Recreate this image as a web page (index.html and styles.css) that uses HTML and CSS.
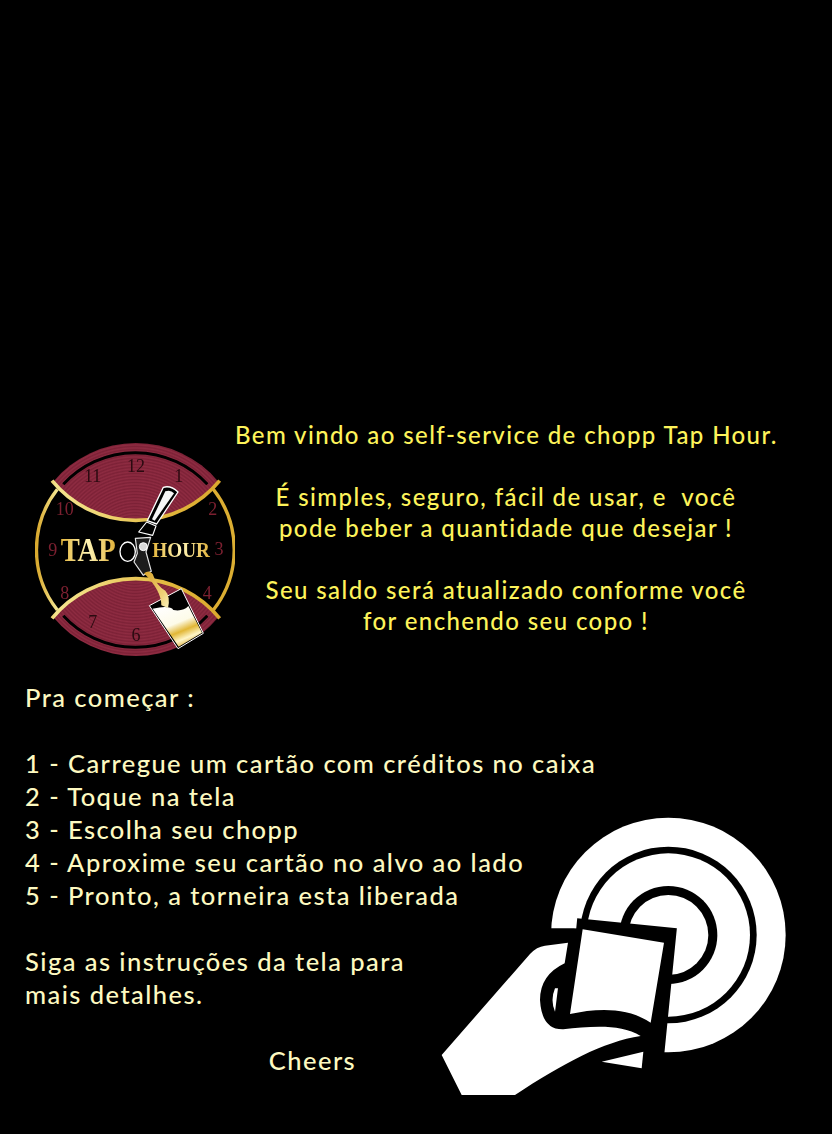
FILE: index.html
```html
<!DOCTYPE html>
<html lang="pt-BR">
<head>
    <meta charset="UTF-8">
    <meta name="viewport" content="width=device-width, initial-scale=1.0">
    <title>Tap Hour</title>
    <link rel="stylesheet" href="styles.css">
</head>
<body>
    <div class="screen">
        <div class="welcome">
            <svg class="logo" viewBox="45 30 600 660" xmlns="http://www.w3.org/2000/svg">
                <defs>
                    <radialGradient id="rings" gradientUnits="userSpaceOnUse" cx="345" cy="360" r="9" spreadMethod="repeat">
                        <stop offset="0" stop-color="#8f2c42"/>
                        <stop offset="0.5" stop-color="#7c2136"/>
                        <stop offset="1" stop-color="#8f2c42"/>
                    </radialGradient>
                    <linearGradient id="gold" gradientUnits="userSpaceOnUse" x1="50" y1="0" x2="640" y2="0">
                        <stop offset="0" stop-color="#d9a92e"/>
                        <stop offset="0.1" stop-color="#f4e48e"/>
                        <stop offset="0.3" stop-color="#f0d878"/>
                        <stop offset="0.7" stop-color="#e0b53a"/>
                        <stop offset="1" stop-color="#d9a52a"/>
                    </linearGradient>
                    <linearGradient id="goldText" x1="0" y1="0" x2="1" y2="0">
                        <stop offset="0" stop-color="#e3b53c"/>
                        <stop offset="0.5" stop-color="#fff4b4"/>
                        <stop offset="1" stop-color="#e0b038"/>
                    </linearGradient>
                    <linearGradient id="beer" x1="0.2" y1="0" x2="0.7" y2="1">
                        <stop offset="0" stop-color="#fff"/>
                        <stop offset="0.45" stop-color="#fdfbe8"/>
                        <stop offset="0.65" stop-color="#e2b736"/>
                        <stop offset="0.82" stop-color="#fff6c8"/>
                        <stop offset="1" stop-color="#d9a52a"/>
                    </linearGradient>
                    <linearGradient id="pour" x1="0" y1="0" x2="1" y2="1">
                        <stop offset="0" stop-color="#d9a52a"/>
                        <stop offset="0.7" stop-color="#efd27a"/>
                        <stop offset="1" stop-color="#fbf3c0"/>
                    </linearGradient>
                </defs>
                <path d="M100 155 A322 322 0 0 1 595 155 A325 325 0 0 1 100 155Z" fill="url(#rings)"/>
                <path d="M100 562 A322 322 0 0 0 595 562 A325 325 0 0 0 100 562Z" fill="url(#rings)"/>
                <path d="M130 163 A293 293 0 0 1 562 163" fill="none" stroke="#000" stroke-width="9"/>
                <path d="M130 557 A293 293 0 0 0 562 557" fill="none" stroke="#000" stroke-width="9"/>
                <path d="M112 178 A293 293 0 0 0 112 540" fill="none" stroke="url(#gold)" stroke-width="10"/>
                <path d="M580 178 A293 293 0 0 1 580 540" fill="none" stroke="#dcae32" stroke-width="10"/>
                <path d="M96 152 A325 325 0 0 0 599 152" fill="none" stroke="url(#gold)" stroke-width="11"/>
                <path d="M96 565 A325 325 0 0 1 599 565" fill="none" stroke="url(#gold)" stroke-width="11"/>

                <g class="hours dark">
                    <text x="348" y="125">12</text>
                    <text x="476" y="156">1</text>
                    <text x="218" y="156">11</text>
                    <text x="218" y="594">7</text>
                    <text x="348" y="632">6</text>
                </g>
                <g class="hours red">
                    <text x="134" y="256">10</text>
                    <text x="578" y="256">2</text>
                    <text x="98" y="378">9</text>
                    <text x="597" y="376">3</text>
                    <text x="134" y="508">8</text>
                    <text x="562" y="506">4</text>
                </g>
                <text class="tap" x="122" y="394" textLength="165" lengthAdjust="spacingAndGlyphs" fill="url(#goldText)">TAP</text>
                <text class="hour" x="397" y="382" textLength="173" lengthAdjust="spacingAndGlyphs" fill="url(#goldText)">HOUR</text>

                <!-- tap handle -->
                <path d="M430 172 Q452 165 474 186 L410 282 L382 272Z" fill="#000" stroke="#fff" stroke-width="4" stroke-linejoin="round"/>
                <path d="M436 184 Q452 178 462 190 L404 272 L396 268Z" fill="#f6f6f6"/>
                <path d="M380 276 L408 288 L398 316 L356 306Z" fill="#000" stroke="#fff" stroke-width="3.5" stroke-linejoin="round"/>
                <ellipse cx="323" cy="365" rx="23" ry="29" fill="none" stroke="#fff" stroke-width="4"/>
                <path d="M346 325 L392 322 L378 366 L394 424 L370 436 L342 396 L352 370Z" fill="#1c1c1c" stroke="#e6e6e6" stroke-width="3.5" stroke-linejoin="round"/>
                <circle cx="370" cy="350" r="12" fill="#d8d8d8" stroke="#fff" stroke-width="3"/>
                <!-- pour and glass -->
                <path d="M388 527 L484 476 L550 610 L474 656Z" fill="#000" stroke="#fff" stroke-width="3" stroke-linejoin="round"/>
                <path d="M398 536 Q450 525 460 540 Q490 545 505 528 L546 608 L476 650Z" fill="url(#beer)"/>
                <path d="M372 430 Q388 418 398 432 Q410 468 436 482 Q452 500 444 534 L424 526 Q424 482 372 430Z" fill="url(#pour)"/>
            </svg>
            <div class="welcome-text">
                <p>Bem vindo ao self-service de chopp Tap Hour.</p>
                <p>É simples, seguro, fácil de usar, e &nbsp;você<br>pode beber a quantidade que desejar !</p>
                <p>Seu saldo será atualizado conforme você<br>for enchendo seu copo !</p>
            </div>
        </div>

        <div class="instructions">
            <div class="steps">
                <p>Pra começar :</p>
                <p>1 - Carregue um cartão com créditos no caixa<br>2 - Toque na tela<br>3 - Escolha seu chopp<br>4 - Aproxime seu cartão no alvo ao lado<br>5 - Pronto, a torneira esta liberada</p>
                <p>Siga as instruções da tela para<br>mais detalhes.</p>
                <p class="cheers">Cheers</p>
            </div>
            <svg class="tap-icon" viewBox="0 0 1110 930" xmlns="http://www.w3.org/2000/svg">
                <defs>
                    <clipPath id="ringArea">
                        <path d="M300 0H1110V930H690L720 400L430 385H300Z"/>
                    </clipPath>
                </defs>
                <g clip-path="url(#ringArea)">
                    <circle cx="715" cy="405" r="352" fill="#fff"/>
                    <circle cx="715" cy="405" r="265" fill="#000"/>
                    <circle cx="715" cy="405" r="245" fill="#fff"/>
                    <circle cx="715" cy="405" r="147" fill="#000"/>
                    <circle cx="715" cy="405" r="120" fill="#fff"/>
                </g>
                <path d="M440 372 L722 400 L686 760" fill="none" stroke="#000" stroke-width="34"/>
                <path d="M35 765 L300 462 Q320 440 345 437 L414 428 L404 490 Q330 525 330 600 Q335 690 400 688 C480 680 570 670 632 708 C520 725 400 790 255 885 L95 885Z" fill="#fff"/>
                <path d="M375 565 Q360 600 375 635 L384 565Z" fill="#fff"/>
                <path d="M515 785 L640 755 L635 805Z" fill="#fff"/>
                <path d="M458 388 L702 428 L662 668 C590 620 500 625 420 642Z" fill="#fff"/>
            </svg>
        </div>
    </div>
</body>
</html>
```

FILE: styles.css
```css
html, body { margin: 0; padding: 0; background-color: #000; }
p { margin: 0; }

.screen {
    width: 832px;
    height: 1134px;
    overflow: hidden;
    font-family: "Lato", sans-serif;
    font-weight: 500;
}

.welcome {
    display: flex;
    align-items: flex-start;
    padding: 419px 0 0 35px;
}
.logo { width: 200px; height: 220px; margin-top: 21px; flex-shrink: 0; filter: blur(0.4px); }
.welcome-text {
    width: 542px;
    color: #fdf35a;
    font-size: 24px;
    letter-spacing: 1.4px;
    line-height: 31px;
    text-align: center;
    white-space: nowrap;
}
.welcome-text p + p { margin-top: 31px; }

.hours text { font-family: "Liberation Serif", serif; font-size: 54px; text-anchor: middle; }
.hours.dark { fill: #2a0a10; }
.hours.red { fill: #7c2030; }
.tap { font-family: "Liberation Serif", serif; font-size: 104px; font-weight: 700; }
.hour { font-family: "Liberation Serif", serif; font-size: 62px; font-weight: 700; }

.instructions {
    display: grid;
    height: 429px;
    margin-top: 21px;
    padding: 0 0 24px 25px;
    color: #fdf9c0;
    font-size: 25.5px;
    letter-spacing: 1.45px;
    line-height: 33px;
}
.steps { grid-area: 1 / 1; width: 575px; white-space: nowrap; }
.steps p + p { margin-top: 33px; }
.cheers { text-align: center; }
.tap-icon {
    grid-area: 1 / 1;
    justify-self: end;
    align-self: end;
    width: 370px;
    height: 310px;
    margin-right: 32px;
    filter: blur(0.5px);
}
```
